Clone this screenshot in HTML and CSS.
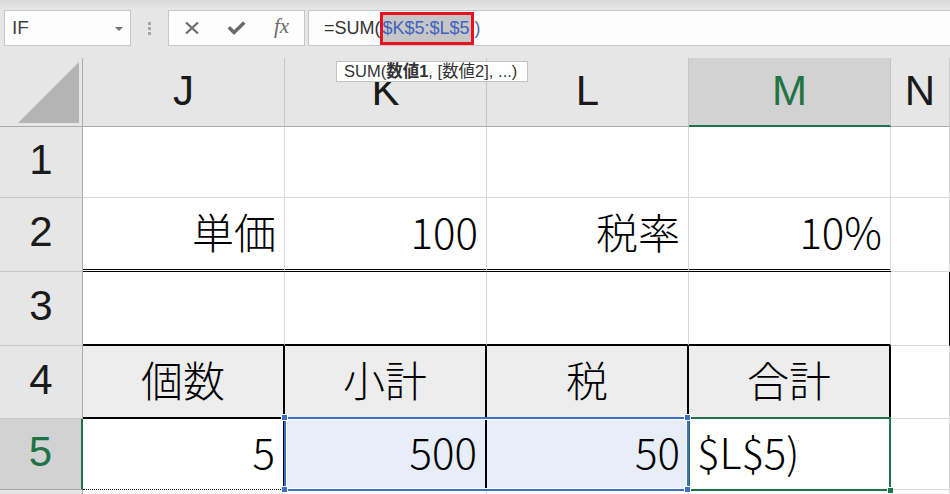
FILE: index.html
```html
<!DOCTYPE html>
<html>

<head>
    <meta charset="utf-8">
    <title>Book1 - Excel</title>
    <link rel="stylesheet" href="styles.css">
</head>

<body>
    <div class="window">
        <!-- Formula bar -->
        <div class="toolbar">
            <div class="namebox">
                <span>IF</span>
                <span class="caret"></span>
            </div>
            <div class="grip"><i></i><i></i><i></i></div>
            <div class="fbtns">
                <span class="fbtn">
                    <svg width="16" height="14" viewBox="0 0 16 14">
                        <path d="M2 1.5 L14 12.5 M14 1.5 L2 12.5" stroke="#6b6b6b" stroke-width="2.2" fill="none" />
                    </svg>
                </span>
                <span class="fbtn">
                    <svg width="19" height="14" viewBox="0 0 19 14">
                        <path d="M1.8 6.3 L7 11.5 L17.3 1.6" stroke="#6b6b6b" stroke-width="3.4" fill="none" />
                    </svg>
                </span>
                <span class="fbtn fx">fx</span>
            </div>
            <div class="formula">=SUM(<span class="ref">$K$5:$L$5</span><span class="paren">)</span></div>
        </div>

        <!-- Function hint -->
        <div class="tip">SUM(<b>数値1</b>, [数値2], ...)</div>

        <!-- Sheet -->
        <div class="sheet">
            <div class="corner">
                <svg width="82" height="68" viewBox="0 0 82 68">
                    <polygon points="18,65 79,65 79,4" fill="#b4b4b4" />
                </svg>
            </div>
            <div class="hd">J</div>
            <div class="hd">K</div>
            <div class="hd">L</div>
            <div class="hd sel">M</div>
            <div class="hd">N</div>

            <div class="rh">1</div>
            <div class="c"></div>
            <div class="c"></div>
            <div class="c"></div>
            <div class="c"></div>
            <div class="c"></div>

            <div class="rh">2</div>
            <div class="c num dbl">単価</div>
            <div class="c num dbl">100</div>
            <div class="c num dbl">税率</div>
            <div class="c num dbl">10%</div>
            <div class="c"></div>

            <div class="rh">3</div>
            <div class="c thick"></div>
            <div class="c thick"></div>
            <div class="c thick"></div>
            <div class="c thick"></div>
            <div class="c edge"></div>

            <div class="rh">4</div>
            <div class="c title">個数</div>
            <div class="c title">小計</div>
            <div class="c title">税</div>
            <div class="c title">合計</div>
            <div class="c"></div>

            <div class="rh sel">5</div>
            <div class="c num dots bar">5</div>
            <div class="c num pick bar k5">500</div>
            <div class="c num pick l5">50</div>
            <div class="c m5">$L$5)</div>
            <div class="c"></div>

            <div class="rh"></div>
            <div class="c"></div>
            <div class="c"></div>
            <div class="c"></div>
            <div class="c"></div>
            <div class="c"></div>

            <!-- selection outlines -->
            <div class="active"><span class="fill"></span></div>
            <div class="range">
                <span class="h tl"></span>
                <span class="h tr"></span>
                <span class="h bl"></span>
                <span class="h br"></span>
            </div>
        </div>
    </div>
</body>

</html>
```

FILE: styles.css
```css
body {
    margin: 0;
    padding: 0;
    overflow: hidden;
    background-color: #e6e6e6;
}

.window {
    position: relative;
    width: 950px;
    height: 494px;
    overflow: hidden;
}

/* Formula bar */
.toolbar {
    height: 58px;
    box-sizing: border-box;
    padding: 10px 0 0 4px;
    display: flex;
    align-items: flex-start;
    background: linear-gradient(#d9d9d9, #e6e6e6 9px);
    font-family: "Liberation Sans", Arial, sans-serif;
}

.namebox,
.fbtns,
.formula {
    height: 36px;
    box-sizing: border-box;
    background-color: #fdfdfd;
    border: 1px solid #c6c6c6;
    display: flex;
    align-items: center;
}

.namebox {
    width: 127px;
    padding: 0 7px 0 7px;
    justify-content: space-between;
    font-size: 19px;
    color: #444;
}

.caret {
    width: 0;
    height: 0;
    border-left: 4px solid transparent;
    border-right: 4px solid transparent;
    border-top: 4px solid #727272;
    margin-top: 2px;
}

.grip {
    width: 37px;
    height: 36px;
    display: flex;
    flex-direction: column;
    align-items: center;
    justify-content: center;
    gap: 2px;
}

.grip i {
    width: 3px;
    height: 3px;
    background-color: #a6a6a6;
}

.fbtns {
    width: 137px;
    margin-right: 3px;
}

.fbtn {
    width: 45px;
    height: 34px;
    display: flex;
    align-items: center;
    justify-content: center;
}

.fx {
    font-family: "Liberation Serif", "Times New Roman", serif;
    font-style: italic;
    font-size: 21px;
    color: #6b6b6b;
    padding-bottom: 3px;
    box-sizing: border-box;
}

.formula {
    flex: 1;
    border-right: none;
    padding-left: 15px;
    font-size: 18px;
    color: #333;
}

.ref {
    position: relative;
    display: inline-block;
    height: 27px;
    line-height: 27px;
    padding: 0 2px 0 2px;
    background-color: #c6c6c6;
    color: #3f62c2;
}

/* red marker box around the reference */
.ref::after {
    content: "";
    position: absolute;
    top: -3px;
    bottom: -3px;
    left: -1px;
    right: -2px;
    border: 3px solid #e8111d;
}

.paren {
    color: #5466a8;
    margin-left: 3px;
}

/* Function hint */
.tip {
    position: absolute;
    left: 336px;
    top: 61px;
    width: 192px;
    height: 21px;
    box-sizing: border-box;
    padding: 0 7px;
    background-color: #fff;
    border: 1px solid #c3c3c3;
    font-family: "Liberation Sans", Arial, "Noto Sans CJK JP", sans-serif;
    font-size: 16.5px;
    line-height: 19px;
    color: #333;
    white-space: nowrap;
    z-index: 5;
}

/* Sheet grid */
.sheet {
    display: grid;
    grid-template-columns: 83px repeat(4, 202px) 1fr;
    grid-template-rows: 69px 71px 74px 74px 73px 71px 1fr;
    height: 436px;
    background-color: #fff;
}

.sheet > div {
    box-sizing: border-box;
}

.corner {
    background-color: #e6e6e6;
    border-right: 1px solid #ababab;
    border-bottom: 1px solid #ababab;
}

.corner svg {
    display: block;
}

.hd,
.rh {
    background-color: #e6e6e6;
    font-family: "Liberation Sans", Arial, sans-serif;
    font-size: 42px;
    line-height: 1;
    color: #1a1a1a;
    display: flex;
    align-items: center;
    justify-content: center;
}

.hd {
    border-right: 1px solid #c6c6c6;
    border-bottom: 1px solid #ababab;
    padding-bottom: 2px;
}

.rh {
    border-right: 1px solid #ababab;
    border-bottom: 1px solid #c6c6c6;
    padding-bottom: 5px;
}

.hd.sel {
    background-color: #d2d2d2;
    color: #217346;
    border-bottom: 2px solid #217346;
}

.rh.sel {
    background-color: #d2d2d2;
    color: #217346;
    border-right: 2px solid #217346;
    border-bottom-color: #ababab;
}

.c {
    border-right: 1px solid #d9d9d9;
    border-bottom: 1px solid #d9d9d9;
    padding: 0 8px 6px 8px;
    font-family: "Noto Sans CJK JP", sans-serif;
    font-weight: 300;
    font-size: 42px;
    line-height: 1;
    color: #000;
    display: flex;
    align-items: center;
    white-space: nowrap;
}

.num {
    justify-content: flex-end;
}

.dbl {
    border-bottom: 3px double #000;
}

.thick {
    border-bottom: 2px solid #000;
}

.edge {
    border-right-color: #000;
}

.title {
    justify-content: center;
    background-color: #ededed;
    border-right: 2px solid #000;
    border-bottom: 2px solid #000;
}

.pick {
    background-color: #e8eef8;
}

.bar {
    border-right: 2px solid #000;
}

.dots {
    border-bottom: 1px dotted #000;
}

/* row 5 cells sit under the selection outlines */
.k5 {
    grid-row: 6;
    grid-column: 3;
}

.l5 {
    grid-row: 6;
    grid-column: 4;
}

.m5 {
    grid-row: 6;
    grid-column: 5;
}

/* Active cell and selected range */
.active {
    grid-column: 5;
    grid-row: 6;
    margin: -2px 0 -1px -1px;
    border: 2px solid #217346;
    position: relative;
}

.fill {
    position: absolute;
    right: -4px;
    bottom: -4px;
    width: 5px;
    height: 5px;
    background-color: #217346;
    box-shadow: 0 0 0 1px #fff;
}

.range {
    grid-column: 3 / 5;
    grid-row: 6;
    margin: -2px 0 -1px -1px;
    border: 2px solid #3b70c4;
    box-shadow: inset 0 0 0 1px #fff;
    position: relative;
}

.h {
    position: absolute;
    width: 5px;
    height: 5px;
    background-color: #3b70c4;
    box-shadow: 0 0 0 1px #fff;
}

.tl {
    left: -4px;
    top: -4px;
}

.tr {
    right: -3px;
    top: -4px;
}

.bl {
    left: -4px;
    bottom: -3px;
}

.br {
    right: -3px;
    bottom: -3px;
}
```
